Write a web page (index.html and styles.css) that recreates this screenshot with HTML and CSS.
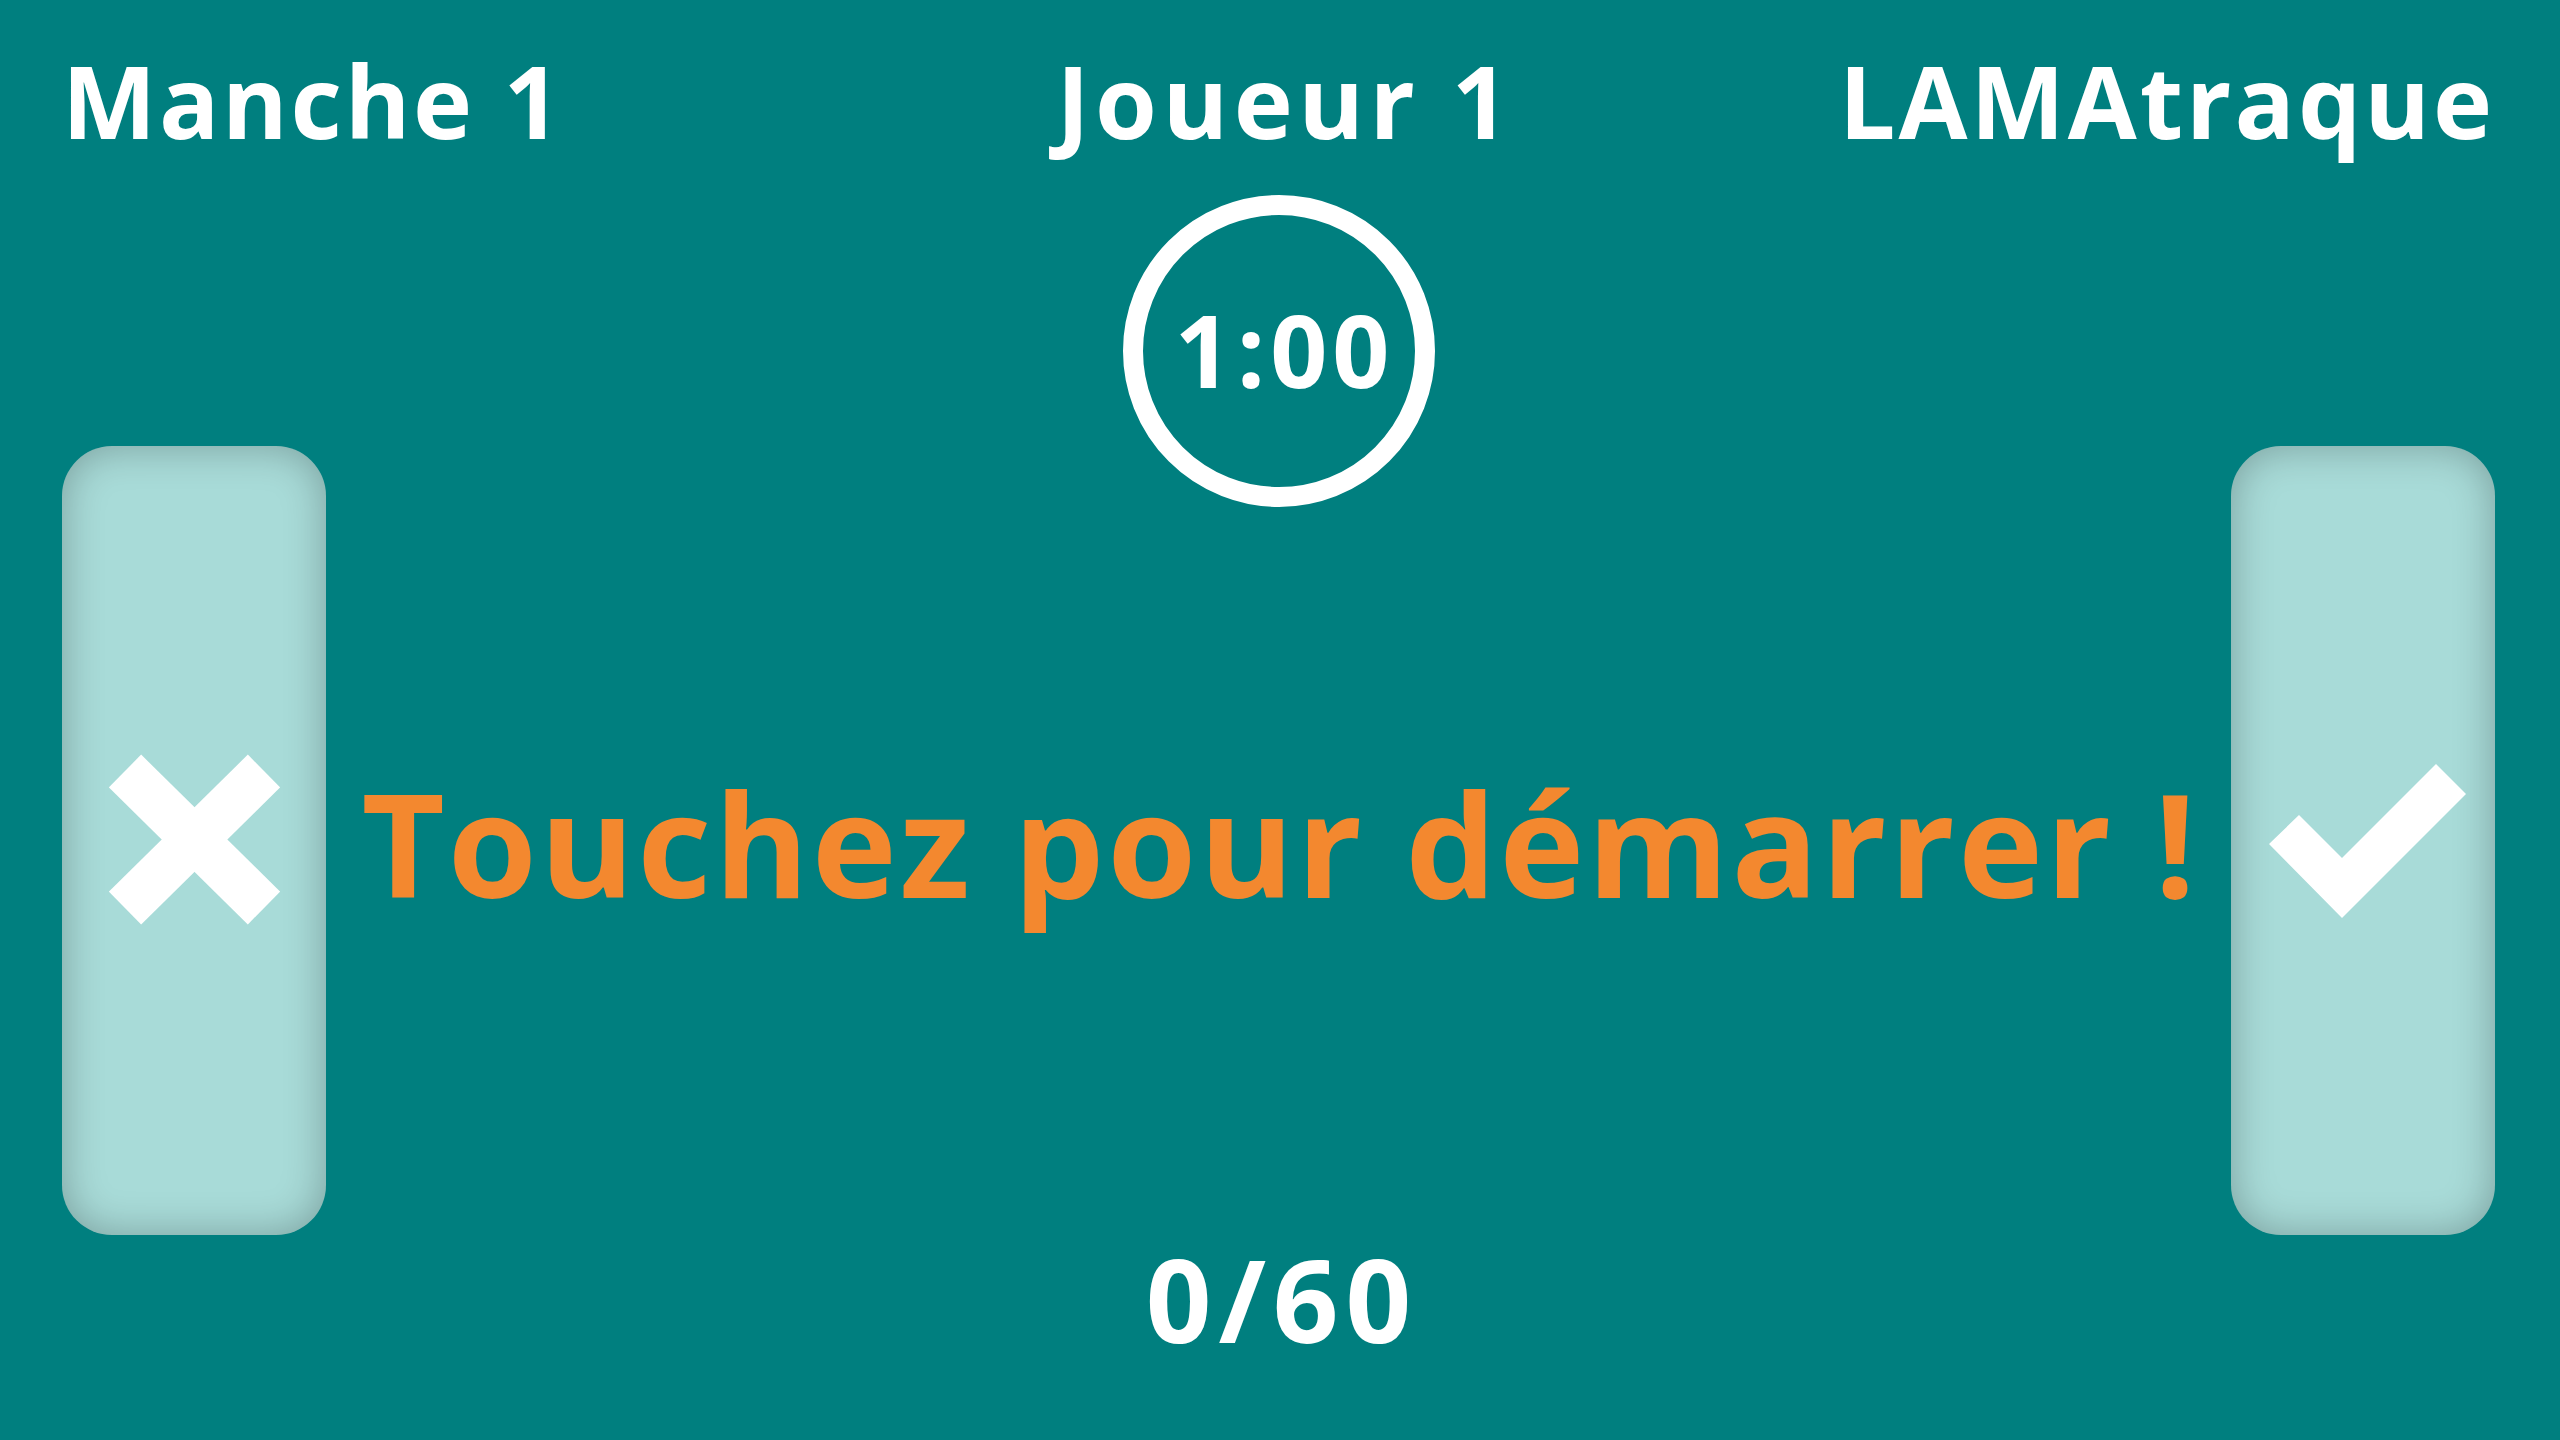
FILE: index.html
```html
<!DOCTYPE html>
<html lang="fr">
<head>
<meta charset="utf-8">
<title>LAMAtraque</title>
<link rel="stylesheet" href="styles.css">
</head>
<body>
<div class="screen">
  <header class="topbar">
    <div class="round">Manche 1</div>
    <div class="player">Joueur 1</div>
    <div class="brand">LAMAtraque</div>
  </header>
  <main class="stage">
    <button class="pad pad-no" aria-label="Refuser">
      <svg class="icon-x" viewBox="0 0 171 171" width="171" height="171">
        <line x1="16" y1="17" x2="155" y2="154" stroke="#fff" stroke-width="46"/>
        <line x1="155" y1="17" x2="16" y2="154" stroke="#fff" stroke-width="46"/>
      </svg>
    </button>
    <section class="center">
      <div class="timer"><span class="timer-text">1:00</span></div>
      <div class="prompt">Touchez pour démarrer !</div>
      <div class="score">0/60</div>
    </section>
    <button class="pad pad-yes" aria-label="Valider">
      <svg class="icon-check" viewBox="0 0 197 154" width="197" height="154">
        <polygon points="0,80 30,51 73,94 167,0 197,30 73,154" fill="#fff"/>
      </svg>
    </button>
  </main>
</div>
</body>
</html>
```

FILE: styles.css
```css
html, body {
  margin: 0;
  padding: 0;
}
body {
  background: #007f7f;
  font-family: "Open Sans", "Lato", sans-serif;
  font-weight: 700;
  color: #ffffff;
}
.screen {
  width: 2560px;
  height: 1440px;
  overflow: hidden;
  display: flex;
  flex-direction: column;
}
.topbar {
  display: grid;
  grid-template-columns: 1fr auto 1fr;
  align-items: start;
  padding: 50px 65px 0 62px;
  font-size: 100px;
  line-height: 100px;
}
.round { justify-self: start; letter-spacing: 0.027em; }
.player { justify-self: center; letter-spacing: 0.055em; margin-left: 14px; }
.brand { justify-self: end; letter-spacing: 0.03em; }

.stage {
  display: grid;
  grid-template-columns: 264px 1fr 264px;
  padding: 0 65px 0 62px;
  align-items: start;
}
.pad {
  margin: 296px 0 0 0;
  height: 789px;
  width: 264px;
  border: none;
  padding: 0;
  border-radius: 50px;
  background: #a8dbd8;
  box-shadow: inset 0 0 42px rgba(0, 0, 0, 0.28);
  display: flex;
  align-items: center;
  justify-content: center;
}
.icon-x { display: block; margin-top: -3px; }
.icon-check { display: block; margin-left: 8px; }

.center {
  display: flex;
  flex-direction: column;
  align-items: center;
}
.timer {
  margin-top: 45px;
  width: 312px;
  height: 312px;
  box-sizing: border-box;
  border: 20px solid #ffffff;
  border-radius: 50%;
  display: flex;
  align-items: center;
  justify-content: center;
}
.timer-text {
  font-size: 100px;
  line-height: 100px;
  letter-spacing: 0.05em;
  margin-left: 12px;
  margin-top: -4px;
}
.prompt {
  margin-top: 263px;
  font-size: 144px;
  line-height: 144px;
  letter-spacing: 0.02em;
  margin-left: 3px;
  color: #f3882f;
  white-space: nowrap;
}
.score {
  margin-top: 327px;
  font-size: 115px;
  line-height: 115px;
  letter-spacing: 0.06em;
  margin-left: 7px;
}
```
